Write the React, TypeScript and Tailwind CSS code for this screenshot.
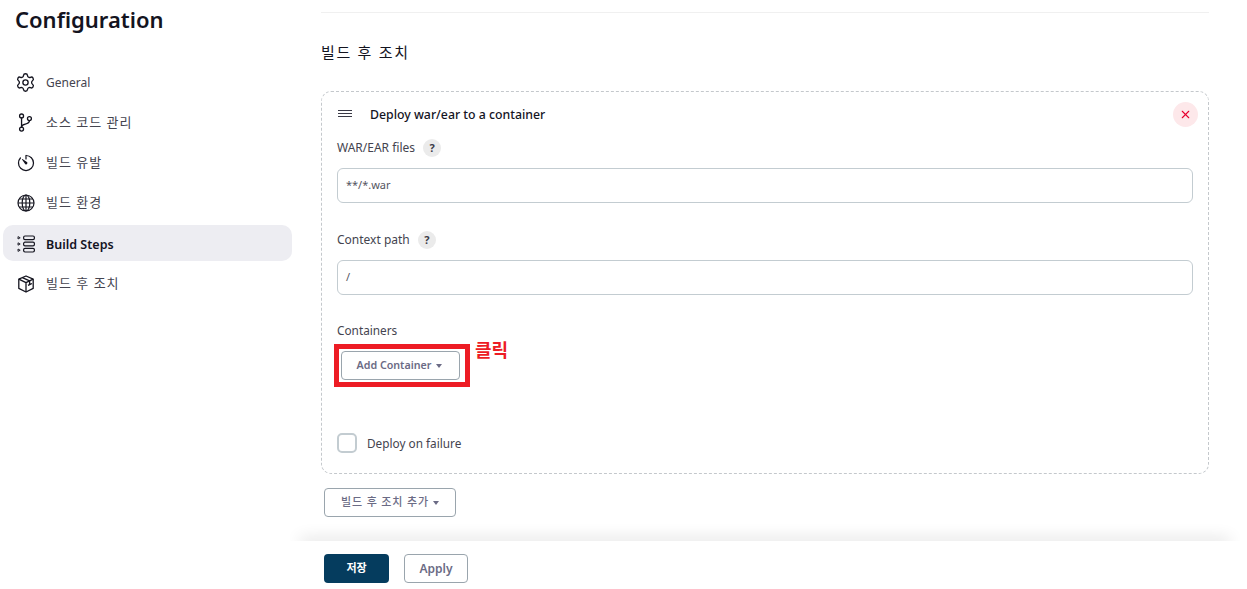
import { IoGitBranchOutline, IoTimerOutline } from 'react-icons/io5';
import { Settings, X } from 'lucide-react';

const FONT = "font-['Noto_Sans','Noto_Sans_CJK_KR',sans-serif]";

function StepsIcon() {
  return (
    <svg viewBox="0 0 18 18" className="w-[18px] h-[18px]" fill="none" stroke="#14141f" strokeWidth="1.2">
      <rect x="6.6" y="1" width="10.8" height="3.6" rx="1.4" />
      <rect x="6.6" y="7.2" width="10.8" height="3.6" rx="1.4" />
      <rect x="6.6" y="13.4" width="10.8" height="3.6" rx="1.4" />
      <path d="M1 1.6l2.2 1.2L1 4zM1 7.8l2.2 1.2L1 10.2zM1 14l2.2 1.2L1 16.4z" strokeWidth="0.9" strokeLinejoin="round" />
    </svg>
  );
}

function GlobeIcon() {
  return (
    <svg viewBox="0 0 18 18" className="w-[18px] h-[18px]" fill="none" stroke="#14141f" strokeWidth="1.2">
      <circle cx="9" cy="9" r="8" />
      <ellipse cx="9" cy="9" rx="3.8" ry="8" />
      <path d="M9 1v16M1 9h16M2.2 5h13.6M2.2 13h13.6" />
    </svg>
  );
}

function BoxIcon() {
  return (
    <svg viewBox="0 0 18 18" className="w-[18px] h-[18px]" fill="none" stroke="#14141f" strokeWidth="1.3" strokeLinejoin="round">
      <path d="M9 1L16.2 4.2V13.4L9 17L1.8 13.4V4.2z" />
      <path d="M1.8 4.2L9 7.6L16.2 4.2M9 7.6V17" />
      <path d="M5.4 2.6L12.6 5.9V9.6L15 8.5M12.6 9.6L11 10.4" />
    </svg>
  );
}

const navItems = [
  { label: 'General', icon: <Settings size={21} strokeWidth={1.5} className="shrink-0" /> },
  { label: '소스 코드 관리', ko: true, icon: <IoGitBranchOutline size={21} className="shrink-0" /> },
  { label: '빌드 유발', ko: true, icon: <IoTimerOutline size={20} className="shrink-0" /> },
  { label: '빌드 환경', ko: true, icon: <GlobeIcon /> },
  { label: 'Build Steps', icon: <StepsIcon />, active: true },
  { label: '빌드 후 조치', ko: true, icon: <BoxIcon /> },
];

function Help() {
  return (
    <span className="w-[18px] h-[18px] rounded-full bg-[#ebebeb] flex items-center justify-center text-[11px] font-bold text-[#3c3c48]">?</span>
  );
}

function Caret() {
  return <span className="w-0 h-0 border-x-[3.5px] border-x-transparent border-t-[4px] border-t-[#6b6b85]" />;
}

function Field({ label, value }: { label: string; value: string }) {
  return (
    <div>
      <div className="h-[18px] flex items-center gap-[8px] text-[12px] text-[#44444f]">
        {label}
        <Help />
      </div>
      <div className="mt-[11px] h-[35px] border border-[#c3ccd1] rounded-[6px] flex items-center px-[8px] text-[11px] text-[#55555f]">
        {value}
      </div>
    </div>
  );
}

export default function App() {
  return (
    <div className={`${FONT} h-[589px] w-[1247px] bg-white overflow-hidden flex text-[#14141f]`}>
      <aside className="w-[321px] shrink-0">
        <h1 className="pl-[15px] pt-[2px] text-[22px] leading-[34px] font-semibold">Configuration</h1>
        <nav className="mt-[27px] pl-[3px] w-[292px] flex flex-col gap-[4.4px]">
          {navItems.map((item) => (
            <div
              key={item.label}
              className={`h-[36px] rounded-[10px] flex items-center pl-[13px] pt-[2px] ${item.active ? 'bg-[#ededf2] font-semibold text-[#14141f]' : 'text-[#44444f]'}`}
            >
              <span className="w-[19px] flex justify-center text-[#14141f]">{item.icon}</span>
              <span className={`ml-[11px] ${item.ko ? 'text-[13px] tracking-[1px]' : item.active ? 'text-[12.5px] pt-[4px]' : 'text-[12px] pt-[2px]'}`}>{item.label}</span>
            </div>
          ))}
        </nav>
      </aside>

      <main className="flex-1 flex flex-col">
        <div className="w-[888px] flex-1">
          <div className="mt-[12px] h-px bg-[#f0f0f0]" />
          <h2 className="mt-[28px] text-[15px] leading-[22px] tracking-[1.7px]">빌드 후 조치</h2>

          <section className="mt-[28px] h-[383px] border border-dashed border-[#c4c8cc] rounded-[10px] px-[15px] pt-[9px]">
            <div className="flex items-center h-[27px]">
              <span className="flex flex-col gap-[1.5px] w-[14px] ml-[1px] mb-[2px]">
                <span className="h-[1.5px] bg-[#3a3a46]" />
                <span className="h-[1.5px] bg-[#3a3a46]" />
                <span className="h-[1.5px] bg-[#3a3a46]" />
              </span>
              <span className="ml-[18px] pt-[2px] text-[12.3px] font-medium">Deploy war/ear to a container</span>
              <span className="ml-auto mr-[-5px] w-[25px] h-[25px] rounded-full bg-[#fde8ea] flex items-center justify-center text-[#e6002e]">
                <X size={13} strokeWidth={2} />
              </span>
            </div>
            <div className="mt-[11px] flex flex-col gap-[28px]">
              <Field label="WAR/EAR files" value="**/*.war" />
              <Field label="Context path" value="/" />
            </div>
            <div className="mt-[26px] text-[11.8px] leading-[18px] text-[#44444f]">Containers</div>
            <div className="mt-[5px] flex items-start">
              <div className="w-[136px] h-[43px] ml-[-3px] border-[5px] border-[#ed1c24] flex items-center justify-center">
                <button className="w-[119px] h-[29px] ml-[-3px] pr-[2px] border border-[#9aa5ad] rounded-[4px] flex items-center justify-center gap-[5px] text-[10.7px] font-semibold text-[#6b6b85]">
                  Add Container
                  <Caret />
                </button>
              </div>
              <span className="ml-[5px] mt-[-5px] text-[18px] leading-[22px] font-bold text-[#ed1c24]">클릭</span>
            </div>
            <div className="mt-[46px] flex items-center gap-[10px] text-[11.8px] text-[#44444f]">
              <span className="w-[20px] h-[20px] rounded-[5px] border-2 border-[#c3ccd1]" />
              <span className="pt-[2px]">Deploy on failure</span>
            </div>
          </section>

          <button className="mt-[14px] ml-[3px] w-[132px] h-[29px] border border-[#9aa5ad] rounded-[4px] flex items-center justify-center gap-[4px] text-[11px] tracking-[0.85px] font-medium text-[#6b6b85]">
            빌드 후 조치 추가
            <Caret />
          </button>
        </div>

        <div className="ml-[-31px] w-[950px] h-[24px] overflow-hidden">
          <div className="mx-[10px] mt-[24px] h-[10px] shadow-[0_-3px_16px_rgba(0,0,0,0.12)]" />
        </div>
        <div className="h-[48px] flex items-start pl-[3px] pt-[13px] gap-[15px]">
          <button className="w-[65px] h-[29px] rounded-[4px] bg-[#053c5e] text-white text-[11px] font-bold">저장</button>
          <button className="w-[64px] h-[29px] rounded-[4px] border border-[#9aa5ad] text-[#6b6b85] text-[12px] font-semibold">Apply</button>
        </div>
      </main>
    </div>
  );
}
